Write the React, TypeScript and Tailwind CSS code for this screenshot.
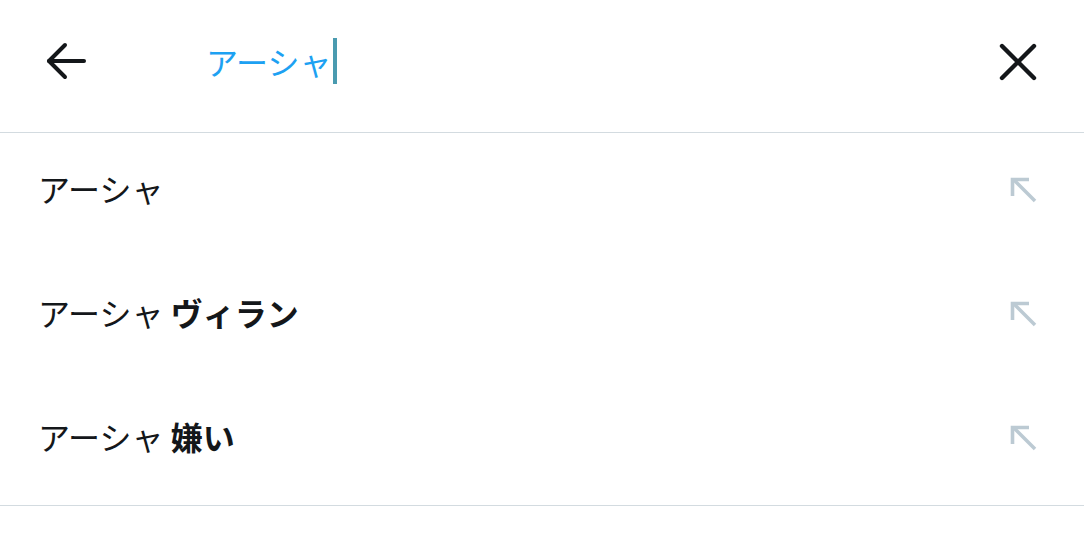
import React from 'react';

const font = { fontFamily: '"Noto Sans CJK JP", "Noto Sans", sans-serif' };

function BackIcon() {
  return (
    <svg width="44" height="44" viewBox="0 0 44 44" fill="none" stroke="#14171a" strokeWidth="4" strokeLinecap="round" strokeLinejoin="round">
      <path d="M5 22h35" />
      <path d="M21 6L5 22l16 16" />
    </svg>
  );
}

function CloseIcon() {
  return (
    <svg width="40" height="40" viewBox="0 0 40 40" fill="none" stroke="#14171a" strokeWidth="4.4" strokeLinecap="round">
      <path d="M4 5l32 32M36 5L4 37" />
    </svg>
  );
}

function FillIcon() {
  return (
    <svg width="30" height="30" viewBox="0 0 30 30" fill="none" stroke="#bccad3" strokeWidth="3.6" strokeLinecap="butt" className="mt-[4px]">
      <path d="M27 26L6 5" />
      <path d="M4.5 21V4.5H21" />
    </svg>
  );
}

const suggestions: { base: string; extra?: string }[] = [
  { base: 'アーシャ' },
  { base: 'アーシャ', extra: 'ヴィラン' },
  { base: 'アーシャ', extra: '嫌い' },
];

export default function App() {
  return (
    <div className="h-[533px] w-[1084px] bg-white" style={font}>
      <header className="flex h-[133px] items-center border-b border-[#d3dbe0] pb-[10px] pl-[44px] pr-[46px]">
        <BackIcon />
        <div className="ml-[118px] flex flex-1 items-center">
          <span className="text-[32px] leading-none text-[#1da1f2]">アーシャ</span>
          <span className="ml-[2px] h-[46px] w-[4px] bg-[#4a9bb0]" />
        </div>
        <CloseIcon />
      </header>
      <ul className="border-b border-[#d3dbe0]">
        {suggestions.map((s, i) => (
          <li key={i} className="flex h-[124px] items-center justify-between pb-[14px] pl-[38px] pr-[46px]">
            <span className="text-[32px] leading-none text-[#14171a]">
              {s.base}
              <span className="font-bold">{s.extra ? ` ${s.extra}` : ''}</span>
            </span>
            <FillIcon />
          </li>
        ))}
      </ul>
    </div>
  );
}
